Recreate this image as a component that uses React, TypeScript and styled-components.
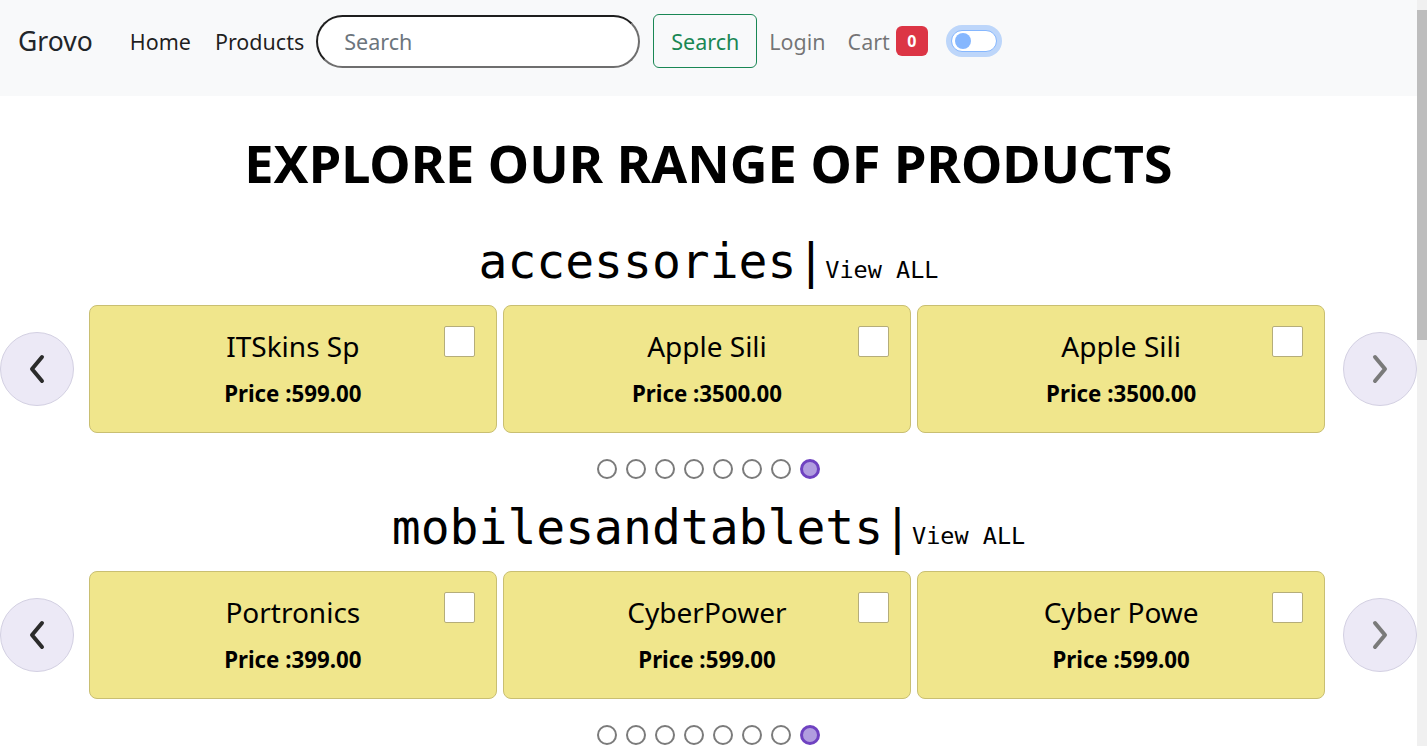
import React from "react";
import styled, { createGlobalStyle } from "styled-components";

type Product = { name: string; price: string };
type Category = { title: string; items: Product[] };

const categories: Category[] = [
    {
        title: "accessories",
        items: [
            { name: "ITSkins Sp", price: "599.00" },
            { name: "Apple Sili", price: "3500.00" },
            { name: "Apple Sili", price: "3500.00" },
        ],
    },
    {
        title: "mobilesandtablets",
        items: [
            { name: "Portronics", price: "399.00" },
            { name: "CyberPower", price: "599.00" },
            { name: "Cyber Powe", price: "599.00" },
        ],
    },
];

const Chevron = ({ dir }: { dir: "left" | "right" }) => (
    <svg width="18" height="30" viewBox="0 0 18 30">
        <polyline
            points={dir === "left" ? "14,3 4,15 14,27" : "4,3 14,15 4,27"}
            fill="none"
            stroke="currentColor"
            strokeWidth="4"
            strokeLinecap="round"
            strokeLinejoin="round"
        />
    </svg>
);

const App = () => {
    return (
        <>
            <GlobalStyle />
            <Page>
                <Navbar>
                    <Brand>Grovo</Brand>
                    <NavLink>Home</NavLink>
                    <NavLink last>Products</NavLink>
                    <SearchInput placeholder="Search" />
                    <SearchButton>Search</SearchButton>
                    <NavLink muted>Login</NavLink>
                    <NavLink muted last>Cart</NavLink>
                    <Badge>0</Badge>
                    <Switch>
                        <Knob />
                    </Switch>
                </Navbar>
                <Main>
                    <Title>EXPLORE OUR RANGE OF PRODUCTS</Title>
                    {categories.map((cat) => (
                        <Section key={cat.title}>
                            <Heading>
                                {cat.title}|<ViewAll>View ALL</ViewAll>
                            </Heading>
                            <Carousel>
                                <Arrow>
                                    <Chevron dir="left" />
                                </Arrow>
                                <Cards>
                                    {cat.items.map((item, i) => (
                                        <Card key={i}>
                                            <Check />
                                            <CardTitle>{item.name}</CardTitle>
                                            <Price>Price :{item.price}</Price>
                                        </Card>
                                    ))}
                                </Cards>
                                <Arrow right>
                                    <Chevron dir="right" />
                                </Arrow>
                            </Carousel>
                            <Dots>
                                {[0, 1, 2, 3, 4, 5, 6, 7].map((d) => (
                                    <Dot key={d} active={d === 7} />
                                ))}
                            </Dots>
                        </Section>
                    ))}
                </Main>
            </Page>
            <ScrollTrack>
                <ScrollThumb />
            </ScrollTrack>
        </>
    );
};

export default App;

const GlobalStyle = createGlobalStyle`
    html, body {
        margin: 0;
        padding: 0;
        background: #fff;
        font-family: "Noto Sans", "Open Sans", sans-serif;
        color: #000;
        overflow: hidden;
    }
`;

const Page = styled.div`
    margin-right: 10px;
    height: 746px;
    overflow: hidden;
`;

const ScrollTrack = styled.div`
    position: fixed;
    top: 0;
    right: 0;
    width: 10px;
    height: 100vh;
    background: #f0f0f0;
    padding-top: 10px;
    box-sizing: border-box;
`;

const ScrollThumb = styled.div`
    height: 330px;
    background: #bdbdbd;
`;

const Navbar = styled.nav`
    height: 96px;
    box-sizing: border-box;
    background: #f8f9fa;
    display: flex;
    align-items: center;
    padding: 0 18px 14px 18px;
`;

const Brand = styled.div`
    font-size: 26.5px;
    color: #212529;
    margin-right: 37px;
`;

const NavLink = styled.div<{ muted?: boolean; last?: boolean }>`
    font-size: 21.5px;
    color: ${(p) => (p.muted ? "rgba(0,0,0,.55)" : "rgba(0,0,0,.88)")};
    margin-right: ${(p) => (p.last ? (p.muted ? "0" : "12px") : p.muted ? "22px" : "24px")};
`;

const SearchInput = styled.input`
    width: 324px;
    height: 53px;
    box-sizing: border-box;
    border-radius: 27px;
    border: 2px solid;
    border-color: #1e1e1e #6e6e6e #6e6e6e #1e1e1e;
    padding: 0 0 0 26px;
    font-family: "Noto Sans", sans-serif;
    font-size: 21.5px;
    background: #fff;
    margin-right: 13px;
    outline: none;
    &::placeholder {
        color: #6c757d;
    }
`;

const SearchButton = styled.button`
    width: 104px;
    height: 54px;
    border: 1px solid #198754;
    border-radius: 6px;
    background: transparent;
    color: #198754;
    font-family: "Noto Sans", sans-serif;
    font-size: 21.5px;
    padding: 0;
    margin-right: 12px;
`;

const Badge = styled.span`
    width: 32px;
    height: 30px;
    margin-left: 6px;
    border-radius: 6px;
    background: #dc3545;
    color: #fff;
    font-weight: 700;
    font-size: 16px;
    display: flex;
    align-items: center;
    justify-content: center;
`;

const Switch = styled.div`
    margin-left: 23px;
    width: 46px;
    height: 22px;
    box-sizing: border-box;
    border: 1px solid #86b7fe;
    border-radius: 12px;
    background: #fff;
    box-shadow: 0 0 0 5px rgba(13, 110, 253, 0.25);
    display: flex;
    align-items: center;
    padding-left: 3px;
`;

const Knob = styled.div`
    width: 16px;
    height: 16px;
    border-radius: 50%;
    background: #86b7fe;
`;

const Main = styled.main`
    display: flex;
    flex-direction: column;
    align-items: center;
`;

const Title = styled.h1`
    margin: 41px 0 48px;
    font-size: 52.3px;
    line-height: 1;
    font-weight: 700;
`;

const Section = styled.section`
    width: 100%;
    display: flex;
    flex-direction: column;
    align-items: center;
    & + & {
        margin-top: 24px;
    }
`;

const Heading = styled.h2`
    margin: 0;
    font-family: "DejaVu Sans Mono", "Liberation Mono", monospace;
    font-weight: 400;
    font-size: 48px;
    line-height: 1;
`;

const ViewAll = styled.span`
    font-size: 23.5px;
`;

const Carousel = styled.div`
    margin-top: 20px;
    width: 100%;
    display: grid;
    grid-template-columns: 74px 1fr 74px;
    align-items: center;
`;

const Arrow = styled.div<{ right?: boolean }>`
    width: 74px;
    height: 74px;
    box-sizing: border-box;
    border-radius: 50%;
    background: #ece9f6;
    border: 1px solid #d3d0e2;
    display: flex;
    align-items: center;
    justify-content: center;
    color: ${(p) => (p.right ? "#7a7a7a" : "#2b2b2b")};
`;

const Cards = styled.div`
    display: grid;
    grid-template-columns: repeat(3, 1fr);
    column-gap: 6.5px;
    padding: 0 18px 0 15px;
`;

const Card = styled.div`
    position: relative;
    height: 128px;
    box-sizing: border-box;
    background: #f0e68c;
    border: 1px solid #c9bf72;
    border-radius: 8px;
    display: flex;
    flex-direction: column;
    align-items: center;
    justify-content: center;
    gap: 17px;
    padding-bottom: 1px;
`;

const Check = styled.div`
    position: absolute;
    top: 20px;
    right: 21px;
    width: 31px;
    height: 31px;
    box-sizing: border-box;
    background: #fff;
    border: 1px solid #b5ad7a;
    border-radius: 2px;
`;

const CardTitle = styled.div`
    font-size: 28px;
    line-height: 1.2;
`;

const Price = styled.div`
    font-size: 22.3px;
    font-weight: 700;
    line-height: 1.2;
`;

const Dots = styled.div`
    margin-top: 26px;
    display: flex;
    gap: 9px;
`;

const Dot = styled.div<{ active?: boolean }>`
    width: 20px;
    height: 20px;
    box-sizing: border-box;
    border-radius: 50%;
    background: ${(p) => (p.active ? "#b19ddf" : "#fff")};
    border: ${(p) => (p.active ? "3px solid #6f42c1" : "2px solid #7b7b7b")};
`;
